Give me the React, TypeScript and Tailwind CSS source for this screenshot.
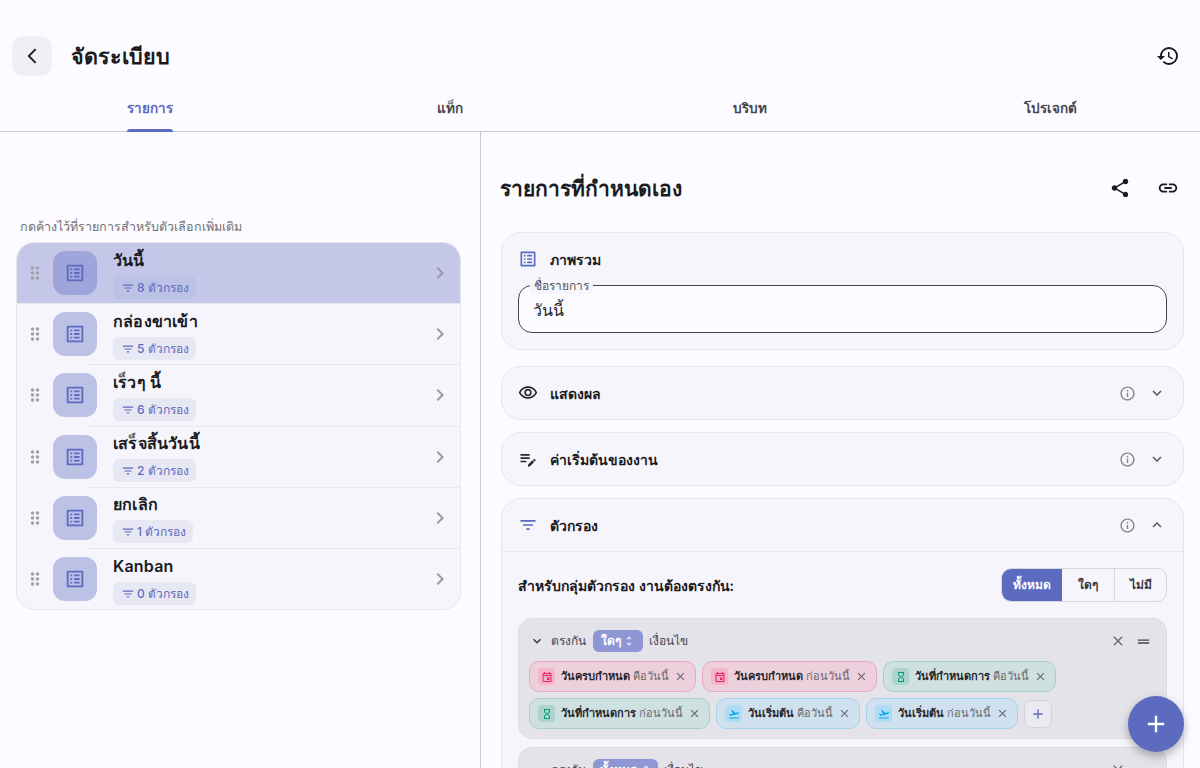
import React from "react";
import {
  MdHistory, MdShare, MdLink, MdOutlineListAlt, MdFilterList, MdDragIndicator, MdChevronRight,
  MdOutlineVisibility, MdEditNote, MdInfoOutline, MdExpandMore, MdExpandLess, MdClose, MdDragHandle,
  MdAdd, MdOutlineEvent, MdHourglassEmpty, MdFlightTakeoff, MdUnfoldMore, MdArrowBackIosNew,
} from "react-icons/md";

const lists = [
  ["วันนี้", "8 ตัวกรอง"],
  ["กล่องขาเข้า", "5 ตัวกรอง"],
  ["เร็วๆ นี้", "6 ตัวกรอง"],
  ["เสร็จสิ้นวันนี้", "2 ตัวกรอง"],
  ["ยกเลิก", "1 ตัวกรอง"],
  ["Kanban", "0 ตัวกรอง"],
];

function ListRow({ name, count, active, last }: { name: string; count: string; active?: boolean; last?: boolean }) {
  return (
    <>
      <div className={`flex items-center pl-[8px] pr-[8px] h-[60.2px] ${active ? "bg-[#c4c7e7]" : ""}`}>
        <MdDragIndicator className="w-5 h-5 text-[#a0a0ad] shrink-0" />
        <div className={`ml-[8px] w-11 h-11 rounded-xl flex items-center justify-center shrink-0 ${active ? "bg-[#9ea5da]" : "bg-[#bcc1e6]"}`}>
          <MdOutlineListAlt className="w-[22px] h-[22px] text-[#5c6bc0]" />
        </div>
        <div className="ml-4 flex-1 flex flex-col items-start mt-[1px]">
          <div className="text-[16px] leading-[22px] font-semibold text-[#1b1b1f] tracking-[0.2px]">{name}</div>
          <div className={`mt-[5px] h-[23px] pl-2 pr-[7px] pt-[1px] rounded-md flex items-center gap-[2px] text-[12px] font-medium text-[#5c6bc0] ${active ? "bg-[#bcc1e6]" : "bg-[#e8e8f5]"}`}>
            <MdFilterList className="w-[14px] h-[14px]" />
            <span>{count}</span>
          </div>
        </div>
        <MdChevronRight className="w-6 h-6 text-[#9a9aa8] shrink-0" />
      </div>
      {!last && <div className={`h-px bg-[#e9e8ef] ${active ? "" : "ml-[71px]"}`} />}
    </>
  );
}

function CollapsedCard({ icon, title }: { icon: React.ReactNode; title: string }) {
  return (
    <div className="h-[54px] rounded-[20px] border border-[#e6e5ec] bg-[#f6f5fb] flex items-center pl-[16px] pr-[17px] mb-3">
      {icon}
      <span className="ml-[12px] text-[14px] font-semibold text-[#1b1b1f]">{title}</span>
      <MdInfoOutline className="ml-auto w-[17px] h-[17px] text-[#85858f]" />
      <MdExpandMore className="ml-[12px] w-[18px] h-[18px] text-[#55555f]" />
    </div>
  );
}

type Tone = "pink" | "green" | "blue";
const toneBox: Record<Tone, string> = {
  pink: "bg-[#eed0dc] border-[#e6a9c0]",
  green: "bg-[#cfe0e0] border-[#a2d2c9]",
  blue: "bg-[#cfe0ee] border-[#a5d4ee]",
};
const toneIcon: Record<Tone, string> = {
  pink: "bg-[#f3b5cb] text-[#e91e63]",
  green: "bg-[#aed5cd] text-[#009b7d]",
  blue: "bg-[#aedcf5] text-[#0ea5e9]",
};

function Chip({ tone, icon, bold, rest }: { tone: Tone; icon: React.ReactNode; bold: string; rest: string }) {
  return (
    <div className={`h-[31px] rounded-[10px] border pl-2 pr-[8px] flex items-center ${toneBox[tone]}`}>
      <div className={`w-[17px] h-[17px] rounded flex items-center justify-center ${toneIcon[tone]}`}>{icon}</div>
      <span className="ml-[6px] text-[11px] font-bold text-[#26262c] whitespace-nowrap">{bold}</span>
      <span className="ml-[3px] text-[11px] text-[#67676f] whitespace-nowrap">{rest}</span>
      <MdClose className="ml-[5px] w-[13px] h-[13px] text-[#66666f]" />
    </div>
  );
}

const cal = <MdOutlineEvent className="w-3 h-3" />;
const glass = <MdHourglassEmpty className="w-3 h-3" />;
const plane = <MdFlightTakeoff className="w-3 h-3" />;

function GroupHeader({ mode, w }: { mode: string; w: string }) {
  return (
    <div className="flex items-center h-[24px]">
      <MdExpandMore className="w-4 h-4 text-[#33333b]" />
      <span className="ml-[6px] text-[12px] text-[#47474f]">ตรงกัน</span>
      <div className={`ml-[7px] h-[22px] rounded-md bg-[#8e97d4] text-white text-[12px] font-semibold flex items-center justify-center gap-[2px] ${w}`}>
        {mode} <MdUnfoldMore className="w-3 h-3" />
      </div>
      <span className="ml-[6px] text-[12px] text-[#47474f]">เงื่อนไข</span>
      <MdClose className="ml-auto w-[16px] h-[16px] text-[#66666f]" />
      <MdDragHandle className="ml-[9px] w-[17px] h-[17px] text-[#44444c]" />
    </div>
  );
}

export default function App() {
  return (
    <div className="w-[1200px] h-[768px] overflow-hidden relative bg-[#fcfbff] text-[#1b1b1f] font-['Inter','Noto_Sans',sans-serif]">
      <header className="h-[88px] flex items-end pb-3 pl-3 pr-[20px]">
        <div className="w-10 h-10 rounded-xl bg-[#f0f0f4] flex items-center justify-center">
          <MdArrowBackIosNew className="w-[18px] h-[18px] -ml-[1px] text-[#1b1b1f]" />
        </div>
        <h1 className="ml-[19px] h-10 flex items-center pt-[1px] text-[21.5px] font-bold">จัดระเบียบ</h1>
        <MdHistory className="ml-auto mb-[8px] w-6 h-6 text-[#1b1b1f]" />
      </header>
      <nav className="h-[44px] grid grid-cols-4 border-b border-[#c9c9d0]">
        {["รายการ", "แท็ก", "บริบท", "โปรเจกต์"].map((t, i) => (
          <div key={t} className="flex justify-center">
            <div className={`relative h-full flex items-center pb-[3px] text-[13.5px] font-semibold ${i === 0 ? "text-[#5c6bc0]" : "text-[#47474f]"}`}>
              {t}
              {i === 0 && <div className="absolute left-0 right-0 bottom-[-1px] h-[3px] rounded-t-sm bg-[#5c6bc0]" />}
            </div>
          </div>
        ))}
      </nav>
      <div className="flex h-[636px]">
        <aside className="w-[481px] shrink-0 border-r border-[#c9c9d0] pl-4 pr-[19px] pt-[86px]">
          <p className="pl-1 h-[18px] flex items-center text-[12.5px] text-[#71717a]">กดค้างไว้ที่รายการสำหรับตัวเลือกเพิ่มเติม</p>
          <div className="mt-[6px] rounded-[18px] border border-[#e6e5ec] overflow-hidden bg-[#f6f5fb]">
            {lists.map(([n, c], i) => (
              <ListRow key={n} name={n} count={c} active={i === 0} last={i === lists.length - 1} />
            ))}
          </div>
        </aside>
        <main className="flex-1 pl-5 pr-4 min-w-0">
          <div className="flex items-center h-[100px] pr-[5px]">
            <h2 className="-ml-[1px] pt-[14px] text-[21px] font-bold">รายการที่กำหนดเอง</h2>
            <MdShare className="ml-auto mt-[12px] w-[22px] h-[22px] text-[#1b1b1f]" />
            <MdLink className="ml-[26px] mt-[12px] w-[22px] h-[22px] text-[#1b1b1f]" />
          </div>
          <div className="rounded-[20px] border border-[#e6e5ec] bg-[#f6f5fb] h-[118px] px-[16px] pt-[14px] mb-4">
            <div className="flex items-center h-[24px]">
              <MdOutlineListAlt className="w-5 h-5 text-[#5c6bc0]" />
              <span className="ml-[12px] text-[14px] font-semibold">ภาพรวม</span>
            </div>
            <div className="relative mt-[14px] h-[48px] rounded-[14px] border border-[#44444c] bg-[#fcfbff] flex items-center pl-[14px] pt-[2px] text-[16px] text-[#26262c]">
              <span className="absolute left-[11px] -top-[8px] px-[4px] bg-[#f6f5fb] text-[12px] leading-4 text-[#55555f]">ชื่อรายการ</span>
              วันนี้
            </div>
          </div>
          <CollapsedCard icon={<MdOutlineVisibility className="w-5 h-5 text-[#26262c]" />} title="แสดงผล" />
          <CollapsedCard icon={<MdEditNote className="w-5 h-5 text-[#26262c]" />} title="ค่าเริ่มต้นของงาน" />
          <div className="rounded-[20px] border border-[#e6e5ec] bg-[#f6f5fb]">
            <div className="h-[53px] border-b border-[#e6e5ec] flex items-center pl-[16px] pr-[17px]">
              <MdFilterList className="w-5 h-5 text-[#5c6bc0]" />
              <span className="ml-[12px] text-[14px] font-semibold">ตัวกรอง</span>
              <MdInfoOutline className="ml-auto w-[17px] h-[17px] text-[#85858f]" />
              <MdExpandLess className="ml-[12px] w-[18px] h-[18px] text-[#55555f]" />
            </div>
            <div className="px-4 pt-[16px]">
              <div className="flex items-center h-[34px]">
                <span className="text-[14px] font-semibold">สำหรับกลุ่มตัวกรอง งานต้องตรงกัน:</span>
                <div className="ml-auto flex h-[34px] rounded-[10px] border border-[#d7d6de] overflow-hidden text-[12px] font-semibold">
                  <div className="w-[60px] bg-[#5c6bc0] text-white flex items-center justify-center">ทั้งหมด</div>
                  <div className="w-[53px] border-r border-[#d7d6de] flex items-center justify-center text-[#3a3a42]">ใดๆ</div>
                  <div className="w-[51px] flex items-center justify-center text-[#3a3a42]">ไม่มี</div>
                </div>
              </div>
              <div className="mt-[16px] rounded-[14px] border border-[#dcdbe2] bg-[#e4e3ea] h-[121px] pl-[10px] pr-[14px] pt-[10px]">
                <GroupHeader mode="ใดๆ" w="w-[50px]" />
                <div className="mt-[8px] flex flex-wrap gap-x-[6px] gap-y-[6px]">
                  <Chip tone="pink" icon={cal} bold="วันครบกำหนด" rest="คือวันนี้" />
                  <Chip tone="pink" icon={cal} bold="วันครบกำหนด" rest="ก่อนวันนี้" />
                  <Chip tone="green" icon={glass} bold="วันที่กำหนดการ" rest="คือวันนี้" />
                  <Chip tone="green" icon={glass} bold="วันที่กำหนดการ" rest="ก่อนวันนี้" />
                  <Chip tone="blue" icon={plane} bold="วันเริ่มต้น" rest="คือวันนี้" />
                  <Chip tone="blue" icon={plane} bold="วันเริ่มต้น" rest="ก่อนวันนี้" />
                  <div className="h-[28px] w-[28px] mt-[1.5px] rounded-lg border border-[#d3d2da] bg-[#eceaf1] flex items-center justify-center">
                    <MdAdd className="w-4 h-4 text-[#5c6bc0]" />
                  </div>
                </div>
              </div>
              <div className="mt-[8px] rounded-[14px] border border-[#dcdbe2] bg-[#e4e3ea] h-[60px] pl-[10px] pr-[14px] pt-[10px]">
                <GroupHeader mode="ทั้งหมด" w="w-[65px]" />
              </div>
            </div>
          </div>
        </main>
      </div>
      <button className="absolute right-[16px] bottom-[16px] w-14 h-14 rounded-full bg-[#5c6bc0] shadow-[0_4px_10px_rgba(0,0,0,0.3)] flex items-center justify-center">
        <MdAdd className="w-7 h-7 text-white" />
      </button>
    </div>
  );
}
